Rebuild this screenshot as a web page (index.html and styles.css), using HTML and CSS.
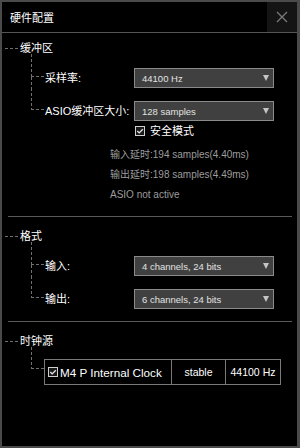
FILE: index.html
```html
<!DOCTYPE html>
<html lang="zh">
<head>
<meta charset="utf-8">
<link rel="stylesheet" href="styles.css">
</head>
<body>
<div class="window">
  <div class="titlebar">
    <span class="title">硬件配置</span>
    <button class="close" aria-label="关闭">
      <svg width="12" height="12" viewBox="0 0 12 12"><path d="M1 1 L11 11 M11 1 L1 11" stroke="#7a7a7a" stroke-width="1.3" fill="none"/></svg>
    </button>
  </div>
  <div class="content">
    <section class="group">
      <div class="group-head"><span class="hline"></span><span class="group-title">缓冲区</span></div>
      <div class="tree">
        <div class="node t14">
          <span class="conn"><span class="conn-top"></span><span class="conn-rest"></span></span>
          <span class="label">采样率:</span>
          <div class="select"><span class="value">44100 Hz</span><span class="arrow"></span></div>
        </div>
        <div class="node t13 last">
          <span class="conn"><span class="conn-top"></span><span class="conn-rest"></span></span>
          <span class="label">ASIO缓冲区大小:</span>
          <div class="select"><span class="value">128 samples</span><span class="arrow"></span></div>
        </div>
      </div>
      <div class="check-row">
        <span class="checkbox"><svg width="10" height="10" viewBox="0 0 10 10"><rect x="0.5" y="0.5" width="9" height="9" fill="#1a1a1a" stroke="#d0d0d0"/><path d="M2.3 5 L4.2 6.9 L7.8 3.2" stroke="#e8e8e8" stroke-width="1.3" fill="none"/></svg></span>
        <span class="check-text">安全模式</span>
      </div>
      <div class="info">
        <div>输入延时:194 samples(4.40ms)</div>
        <div>输出延时:198 samples(4.49ms)</div>
        <div>ASIO not active</div>
      </div>
    </section>
    <hr class="sep">
    <section class="group g2">
      <div class="group-head"><span class="hline"></span><span class="group-title">格式</span></div>
      <div class="tree">
        <div class="node t14">
          <span class="conn"><span class="conn-top"></span><span class="conn-rest"></span></span>
          <span class="label">输入:</span>
          <div class="select"><span class="value">4 channels, 24 bits</span><span class="arrow"></span></div>
        </div>
        <div class="node t13 last">
          <span class="conn"><span class="conn-top"></span><span class="conn-rest"></span></span>
          <span class="label">输出:</span>
          <div class="select"><span class="value">6 channels, 24 bits</span><span class="arrow"></span></div>
        </div>
      </div>
    </section>
    <hr class="sep sep2">
    <section class="group g3">
      <div class="group-head"><span class="hline"></span><span class="group-title">时钟源</span></div>
      <div class="tree">
        <div class="node t12 last">
          <span class="conn"><span class="conn-top"></span><span class="conn-rest"></span></span>
          <div class="clock-table">
            <div class="cell c-name">
              <span class="checkbox"><svg width="10" height="10" viewBox="0 0 10 10"><rect x="0.5" y="0.5" width="9" height="9" fill="#1a1a1a" stroke="#d0d0d0"/><path d="M2.3 5 L4.2 6.9 L7.8 3.2" stroke="#e8e8e8" stroke-width="1.3" fill="none"/></svg></span>
              <span class="clock-name">M4 P Internal Clock</span>
            </div>
            <div class="cell c-state">stable</div>
            <div class="cell c-rate">44100 Hz</div>
          </div>
        </div>
      </div>
    </section>
  </div>
</div>
</body>
</html>
```
FILE: styles.css
```css
:root {
  --line: #707070;
  --dash-v: repeating-linear-gradient(to bottom, var(--line) 0 3px, transparent 3px 5px);
  --dash-h: repeating-linear-gradient(to right, var(--line) 0 3px, transparent 3px 5px);
}
* { box-sizing: border-box; }
html, body {
  margin: 0;
  padding: 0;
  background: #000;
}
body {
  font-family: "Liberation Sans", "Noto Sans CJK SC", sans-serif;
  color: #fff;
}
.window {
  width: 300px;
  height: 448px;
  border: 2px solid #4a4a4a;
  border-right-width: 3px;
  background: #000;
  display: flex;
  flex-direction: column;
}
.titlebar {
  height: 31px;
  flex: none;
  display: flex;
  align-items: stretch;
  border-bottom: 1px solid #555;
}
.title {
  flex: 1;
  font-size: 11px;
  line-height: 30px;
  padding-left: 8px;
  padding-top: 1px;
}
.close {
  width: 30px;
  border: none;
  padding: 0;
  margin: 0;
  background: #141414;
  display: flex;
  align-items: center;
  justify-content: center;
}
.content {
  flex: 1;
  padding-left: 3px;
}
.group { margin-top: 9px; }
.group.g2, .group.g3 { margin-top: 13px; }
.group-head {
  display: flex;
  align-items: center;
  height: 12px;
}
.hline {
  width: 13px;
  height: 1px;
  margin-right: 2px;
  background: var(--dash-h);
}
.group-title {
  font-size: 11px;
  line-height: 12px;
}
.tree { margin-left: 26px; }
.node {
  display: flex;
  align-items: flex-start;
}
.conn {
  flex: none;
  width: 13px;
  align-self: stretch;
  display: flex;
  flex-direction: column;
}
.conn-top {
  flex: none;
  background: var(--dash-v) left top / 1px 100% no-repeat,
              var(--dash-h) left bottom / 100% 1px no-repeat;
}
.conn-rest {
  flex: 1;
  background: var(--dash-v) left top / 1px 100% no-repeat;
}
.node.last .conn-rest { background: none; }
.node.t14 .conn-top { height: 23px; }
.node.t13 .conn-top { height: 22px; }
.node.t12 .conn-top { height: 22px; }
.node.t14 .label, .node.t14 .select { margin-top: 14px; }
.node.t13 .label, .node.t13 .select { margin-top: 13px; }
.node.t12 .clock-table { margin-top: 12px; }
.label {
  width: 90px;
  padding-left: 1px;
  font-size: 11px;
  line-height: 20px;
  white-space: nowrap;
}
.select {
  width: 140px;
  height: 20px;
  border: 1px solid #8a8a8a;
  background: #404040;
  display: flex;
  align-items: center;
  padding: 0 4px 0 7px;
}
.value {
  flex: 1;
  font-size: 9.5px;
  color: #e2e2e2;
  white-space: nowrap;
}
.arrow {
  width: 0;
  height: 0;
  border-left: 3.5px solid transparent;
  border-right: 3.5px solid transparent;
  border-top: 6px solid #c4c4c4;
}
.check-row {
  display: flex;
  align-items: center;
  height: 12px;
  margin-top: 4px;
  padding-left: 130px;
}
.checkbox {
  width: 10px;
  height: 10px;
  display: inline-flex;
  flex: none;
}
.checkbox svg { display: block; }
.check-text {
  font-size: 11px;
  line-height: 12px;
  margin-left: 5px;
}
.info {
  margin-top: 8px;
  padding-left: 105px;
  font-size: 10px;
  line-height: 20px;
  color: #9c9c9c;
}
.sep {
  border: none;
  height: 1px;
  background: #595959;
  margin: 11px 5px 0 3px;
}
.sep2 { margin-top: 12px; }
.clock-table {
  width: 237px;
  height: 26px;
  border: 1px solid #7a7a7a;
  display: flex;
}
.cell {
  display: flex;
  align-items: center;
  font-size: 10.5px;
  white-space: nowrap;
}
.c-name {
  width: 127px;
  border-right: 1px solid #7a7a7a;
  padding-left: 3px;
}
.clock-name {
  font-size: 11.7px;
  margin-left: 2px;
}
.c-state {
  width: 54px;
  border-right: 1px solid #7a7a7a;
  justify-content: center;
}
.c-rate {
  flex: 1;
  justify-content: center;
}
```
